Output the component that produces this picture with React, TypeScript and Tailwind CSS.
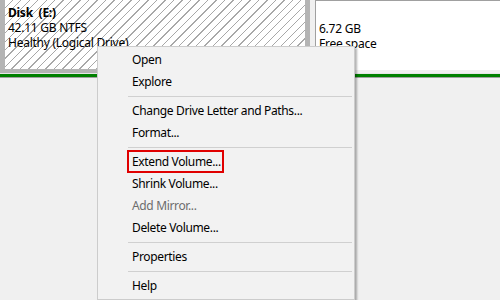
import React from "react";

const font = { fontFamily: '"Noto Sans", "Segoe UI", Arial, sans-serif' };

function Item({ label, disabled }: { label: string; disabled?: boolean }) {
  return (
    <div className={"h-[22px] flex items-center pl-[34px] text-[12px] tracking-[-0.35px] " + (disabled ? "text-[#6d6d6d]" : "text-black")}>
      {label}
    </div>
  );
}

function Sep() {
  return (
    <div className="h-[7px] flex items-center pl-[30px] pr-[2px]">
      <div className="h-px w-full bg-[#d0d0d0]" />
    </div>
  );
}

export default function App() {
  return (
    <div className="relative w-[500px] h-[300px] overflow-hidden bg-[#f0f0f0]" style={font}>
      <div className="flex h-[73px] bg-[#f0f0f0]">
        <div className="w-[310px] h-full bg-[#b4b4b4] pl-[5px] pr-[5px] pb-[4px]">
          <div className="h-full bg-white bg-[repeating-linear-gradient(135deg,#ffffff_0px,#ffffff_5px,#a8a8a8_5px,#a8a8a8_6px)] px-[3px] pt-[5px] text-[12px] leading-[15px] tracking-[-0.25px] text-black">
            <div className="font-bold">Disk&nbsp;&nbsp;(E:)</div>
            <div>42.11 GB NTFS</div>
            <div>Healthy (Logical Drive)</div>
          </div>
        </div>
        <div className="ml-[5px] flex-1 h-full pb-[3px]">
          <div className="h-full bg-white border-l border-t border-[#a0a0a0] px-[3px] pt-[20px] text-[12px] leading-[15px] tracking-[-0.25px] text-black">
            <div>6.72 GB</div>
            <div>Free space</div>
          </div>
        </div>
      </div>
      <div className="h-px bg-[#e6e6e6]" />
      <div className="h-[3px] bg-[#008000]" />
      <div className="h-px bg-[#a0a0a0]" />

      <div className="absolute left-[97px] top-[46px] w-[258px] bg-[#f2f2f2] border border-[#cccccc] py-[2px] shadow-[2px_2px_2px_rgba(0,0,0,0.3)]">
        <Item label="Open" />
        <Item label="Explore" />
        <Sep />
        <Item label="Change Drive Letter and Paths..." />
        <Item label="Format..." />
        <Sep />
        <div className="relative">
          <Item label="Extend Volume..." />
          <div className="absolute left-[29px] top-[-1px] w-[97px] h-[23px] border-2 border-[#e00000]" />
        </div>
        <Item label="Shrink Volume..." />
        <Item label="Add Mirror..." disabled />
        <Item label="Delete Volume..." />
        <Sep />
        <Item label="Properties" />
        <Sep />
        <Item label="Help" />
      </div>
    </div>
  );
}
